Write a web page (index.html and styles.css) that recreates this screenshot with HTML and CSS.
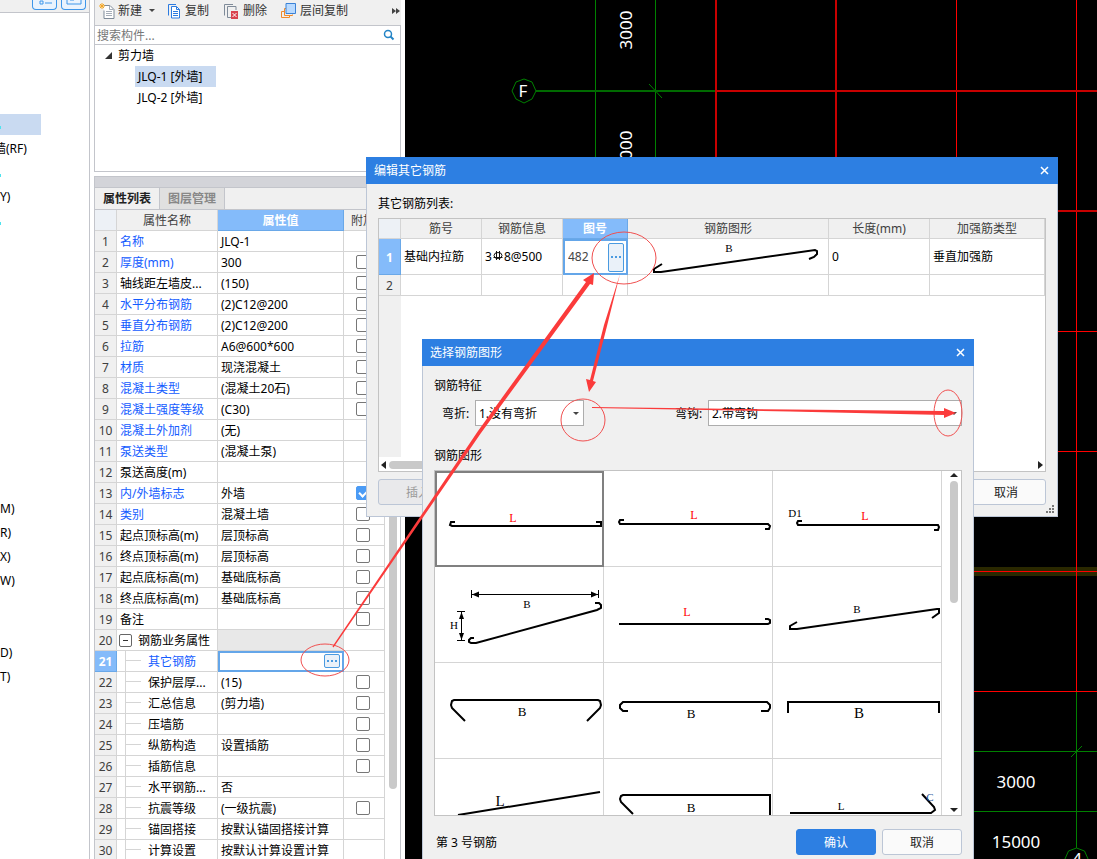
FILE: index.html
```html
<!DOCTYPE html>
<html lang="zh-CN">
<head>
<meta charset="utf-8">
<title>编辑其它钢筋</title>
<link rel="stylesheet" href="styles.css">
</head>
<body>
<div class="app">
  <aside class="nav">
    <div class="nav-tools">
      <button class="nav-btn" aria-label="列表视图"><svg width="16" height="12"><path d="M3 6h3v3h-3zM8 8h7" fill="none" stroke="#3d96ea"/></svg></button>
      <button class="nav-btn" aria-label="图标视图"><svg width="16" height="12"><path d="M1 0v9h14v-9M4 5h4" fill="none" stroke="#3d96ea"/></svg></button>
    </div>
    <ul class="nav-list">
      <li class="selected"><i class="speck"></i></li>
      <li><span class="cut">墙(RF)</span></li>
      <li><i class="speck"></i></li>
      <li>Y)</li>
      <li><i class="speck"></i></li>
      <li></li><li></li><li></li><li></li><li></li><li></li><li></li><li></li><li></li><li></li><li></li>
      <li>M)</li>
      <li>R)</li>
      <li>X)</li>
      <li>W)</li>
      <li></li><li></li>
      <li>D)</li>
      <li>T)</li>
    </ul>
  </aside>

  <section class="panel">
    <div class="toolbar">
      <button class="tool tool-new"><svg width="16" height="16"><path d="M5 2.500h6l4 4v9h-10v-8" fill="#fff" stroke="#7f8b99"/><path d="M10.500 2.500v4h4M7 8.500h6M7 10.500h6M7 12.500h6" fill="none" stroke="#a5adb8"/><path d="M3 0v6M0 3h6M1 1l4 4M5 1l-4 4" stroke="#f5a623"/></svg>新建<i class="caret"></i></button>
      <button class="tool tool-copy"><svg width="14" height="16"><path d="M9 1.500h-7.500v11" fill="none" stroke="#2c7be0"/><path d="M4.500 3.500h5l3 3v8.500h-8z" fill="#fff" stroke="#2c7be0"/><path d="M9.500 3.500v3h3M6 8.500h5M6 10.500h5M6 12.500h5" fill="none" stroke="#2c7be0"/></svg>复制</button>
      <button class="tool tool-del"><svg width="16" height="16"><path d="M10 1.500h-8.500v11M13 7v-3.500h-8.500v11h4" fill="none" stroke="#7f8b99"/><path d="M8 8h7v8h-7z" fill="#d9434e"/><path d="M9.500 10l4 4M13.500 10l-4 4" stroke="#fff"/></svg>删除</button>
      <button class="tool tool-floor"><svg width="16" height="16"><path d="M3 8.500h-2.500v6h8v-2M5 5.500h-1.500v7h8v-1" fill="none" stroke="#f08a2b"/><path d="M5 .5h9.500v10h-9.500z" fill="#b9daff" stroke="#3b82d6"/></svg>层间复制</button>
      <button class="more" aria-label="更多"><svg width="8" height="6"><path d="M0 0l4 3-4 3zM4 0l4 3-4 3z" fill="#444"/></svg></button>
    </div>
    <div class="search">
      <input type="text" placeholder="搜索构件..." aria-label="搜索构件">
      <svg width="12" height="12"><circle cx="5" cy="5" r="3.500" fill="none" stroke="#2384c6" stroke-width="1.500"/><path d="M7.500 7.500l3 3" stroke="#2384c6" stroke-width="2"/></svg>
    </div>
    <div class="tree">
      <div class="tree-root"><svg width="7" height="7"><path d="M7 0v7h-7z" fill="#333"/></svg>剪力墙</div>
      <div class="tree-item"><span class="picked">JLQ-1 [外墙]</span></div>
      <div class="tree-item"><span>JLQ-2 [外墙]</span></div>
    </div>
    <div class="splitter"></div>
    <div class="props">
      <div class="tabs"><button class="tab active">属性列表</button><button class="tab">图层管理</button></div>
      <div class="props-body">
        <table class="grid prop-table">
          <colgroup><col class="c-num"><col class="c-name"><col class="c-value"><col class="c-extra"></colgroup>
          <thead><tr><th class="corner"></th><th>属性名称</th><th class="hot">属性值</th><th class="left">附加</th></tr></thead>
          <tbody>
            <tr><th>1</th><td class="link">名称</td><td>JLQ-1</td><td></td></tr>
            <tr><th>2</th><td class="link">厚度(mm)</td><td>300</td><td><input type="checkbox" aria-label="附加 厚度"></td></tr>
            <tr><th>3</th><td>轴线距左墙皮...</td><td>(150)</td><td><input type="checkbox" aria-label="附加 轴线距左墙皮"></td></tr>
            <tr><th>4</th><td class="link">水平分布钢筋</td><td>(2)C12@200</td><td><input type="checkbox" aria-label="附加 水平分布钢筋"></td></tr>
            <tr><th>5</th><td class="link">垂直分布钢筋</td><td>(2)C12@200</td><td><input type="checkbox" aria-label="附加 垂直分布钢筋"></td></tr>
            <tr><th>6</th><td class="link">拉筋</td><td>A6@600*600</td><td><input type="checkbox" aria-label="附加 拉筋"></td></tr>
            <tr><th>7</th><td class="link">材质</td><td>现浇混凝土</td><td><input type="checkbox" aria-label="附加 材质"></td></tr>
            <tr><th>8</th><td class="link">混凝土类型</td><td>(混凝土20石)</td><td><input type="checkbox" aria-label="附加 混凝土类型"></td></tr>
            <tr><th>9</th><td class="link">混凝土强度等级</td><td>(C30)</td><td><input type="checkbox" aria-label="附加 混凝土强度等级"></td></tr>
            <tr><th>10</th><td class="link">混凝土外加剂</td><td>(无)</td><td></td></tr>
            <tr><th>11</th><td class="link">泵送类型</td><td>(混凝土泵)</td><td></td></tr>
            <tr><th>12</th><td>泵送高度(m)</td><td></td><td></td></tr>
            <tr><th>13</th><td class="link">内/外墙标志</td><td>外墙</td><td><input type="checkbox" checked aria-label="附加 内/外墙标志"></td></tr>
            <tr><th>14</th><td class="link">类别</td><td>混凝土墙</td><td><input type="checkbox" aria-label="附加 类别"></td></tr>
            <tr><th>15</th><td>起点顶标高(m)</td><td>层顶标高</td><td><input type="checkbox" aria-label="附加 起点顶标高"></td></tr>
            <tr><th>16</th><td>终点顶标高(m)</td><td>层顶标高</td><td><input type="checkbox" aria-label="附加 终点顶标高"></td></tr>
            <tr><th>17</th><td>起点底标高(m)</td><td>基础底标高</td><td><input type="checkbox" aria-label="附加 起点底标高"></td></tr>
            <tr><th>18</th><td>终点底标高(m)</td><td>基础底标高</td><td><input type="checkbox" aria-label="附加 终点底标高"></td></tr>
            <tr><th>19</th><td>备注</td><td></td><td><input type="checkbox" aria-label="附加 备注"></td></tr>
            <tr><th>20</th><td class="group"><button class="fold" aria-label="折叠"></button>钢筋业务属性</td><td class="muted"></td><td></td></tr>
            <tr><th class="hot">21</th><td class="child link">其它钢筋</td><td class="editing"><button class="dots" aria-label="编辑其它钢筋"><i></i><i></i><i></i></button></td><td></td></tr>
            <tr><th>22</th><td class="child">保护层厚...</td><td>(15)</td><td><input type="checkbox" aria-label="附加 保护层厚度"></td></tr>
            <tr><th>23</th><td class="child">汇总信息</td><td>(剪力墙)</td><td><input type="checkbox" aria-label="附加 汇总信息"></td></tr>
            <tr><th>24</th><td class="child">压墙筋</td><td></td><td><input type="checkbox" aria-label="附加 压墙筋"></td></tr>
            <tr><th>25</th><td class="child">纵筋构造</td><td>设置插筋</td><td><input type="checkbox" aria-label="附加 纵筋构造"></td></tr>
            <tr><th>26</th><td class="child">插筋信息</td><td></td><td><input type="checkbox" aria-label="附加 插筋信息"></td></tr>
            <tr><th>27</th><td class="child">水平钢筋...</td><td>否</td><td></td></tr>
            <tr><th>28</th><td class="child">抗震等级</td><td>(一级抗震)</td><td><input type="checkbox" aria-label="附加 抗震等级"></td></tr>
            <tr><th>29</th><td class="child">锚固搭接</td><td>按默认锚固搭接计算</td><td></td></tr>
            <tr><th>30</th><td class="child">计算设置</td><td>按默认计算设置计算</td><td></td></tr>
          </tbody>
        </table>
        <div class="vscroll"><div class="vthumb"></div></div>
      </div>
    </div>
  </section>

  <main class="canvas">
    <svg class="drawing" width="692" height="859" viewBox="405 0 692 859">
      <path d="M970 571.500h127" stroke="#2a2800" stroke-width="9"/>
      <g fill="none" stroke="#008000">
        <path d="M595.500 0v160M655.500 0v160M649 84l13 14M970 751.500h127M970 811.500h127M1076.500 692v156M1071 757l11-11"/>
        <path d="M536 91h180" stroke="#006a00" stroke-width="2"/>
        <path d="M524 79l8 3 4 9-4 8-8 4-8-4-4-8 4-9zM1076.500 848l8 3 4 9-4 8-8 4-8-4-4-8 4-9z"/>
      </g>
      <g fill="none" stroke="#f00">
        <path d="M956.500 0v160M1076.500 0v692M1050 331.500h47M1050 451.500h47M970 571.500h127M970 691.500h127"/>
        <path d="M716 0v160M836 0v160M716 91h381M1050 211h47" stroke="#c80000" stroke-width="2"/>
      </g>
      <g class="cad-text">
        <text x="523" y="97">F</text>
        <text x="0" y="0" transform="translate(632 30) rotate(-90)">3000</text>
        <text x="0" y="0" transform="translate(632 150) rotate(-90)">3000</text>
        <text x="1016" y="788">3000</text>
        <text x="1016" y="848">15000</text>
        <text x="1077" y="865">4</text>
      </g>
    </svg>
  </main>

  <section class="dialog list-dialog" role="dialog" aria-label="编辑其它钢筋">
    <header class="title">编辑其它钢筋<button class="close" aria-label="关闭"><svg width="9" height="9"><path d="M1 1l7 7M8 1l-7 7" stroke="#fff" stroke-width="1.500"/></svg></button></header>
    <div class="list-body">
      <div class="caption">其它钢筋列表:</div>
      <div class="list-box">
        <table class="grid bar-table">
          <colgroup><col class="b-num"><col class="b-id"><col class="b-id"><col class="b-code"><col class="b-shape"><col class="b-len"><col></colgroup>
          <thead><tr><th class="corner"></th><th>筋号</th><th>钢筋信息</th><th class="hot">图号</th><th>钢筋图形</th><th>长度(mm)</th><th>加强筋类型</th></tr></thead>
          <tbody>
            <tr class="tall"><th class="hot">1</th><td>基础内拉筋</td><td><span class="spec">3<svg class="rebar" width="12" height="12"><ellipse cx="6" cy="5.500" rx="4" ry="3" fill="none" stroke="#111"/><path d="M4.500 1v9M7.500 1v9M1.500 7.500h9" stroke="#111" fill="none"/></svg>8@500</span></td>
              <td class="editing"><div class="code-edit"><input type="text" value="482" aria-label="图号"><button class="dots" aria-label="选择图形"><i></i><i></i><i></i></button></div></td>
              <td class="shape"><svg width="200" height="35"><path class="bar" d="M34 25l-8 5v3h7L187 11l2 1v3l-3 3-5 2"/><text x="101" y="13">B</text></svg></td><td>0</td><td>垂直加强筋</td></tr>
            <tr><th>2</th><td></td><td></td><td></td><td></td><td></td><td></td></tr>
          </tbody>
        </table>
        <div class="gutter"></div>
        <div class="hscroll"><svg width="5" height="8"><path d="M5 0v8l-5-4z" fill="#222"/></svg><div class="hthumb"></div><svg width="5" height="8"><path d="M0 0v8l5-4z" fill="#222"/></svg></div>
      </div>
      <div class="actions"><button class="btn" disabled>插入</button><button class="btn">取消</button></div>
    </div>
    <svg class="grip" width="9" height="9"><path d="M6 0h2v2h-2zM3 3h2v2h-2zM6 3h2v2h-2zM0 6h2v2h-2zM3 6h2v2h-2zM6 6h2v2h-2z" fill="#777"/></svg>
  </section>

  <section class="dialog pick-dialog" role="dialog" aria-label="选择钢筋图形">
    <header class="title">选择钢筋图形<button class="close" aria-label="关闭"><svg width="9" height="9"><path d="M1 1l7 7M8 1l-7 7" stroke="#fff" stroke-width="1.500"/></svg></button></header>
    <div class="pick-body">
      <div class="caption">钢筋特征</div>
      <div class="fields">
        <label for="bend">弯折:</label>
        <div class="combo combo-bend"><select id="bend"><option>1.没有弯折</option></select></div>
        <label for="hook">弯钩:</label>
        <div class="combo combo-hook"><select id="hook"><option>2.带弯钩</option></select></div>
      </div>
      <div class="caption">钢筋图形</div>
      <div class="gallery">
        <div class="shapes">
          <div class="cell chosen"><svg width="168" height="95"><path class="bar" d="M20 51h-4l-1 3 2 1H166v-4h-5"/><text class="red" x="78" y="51">L</text></svg></div>
          <div class="cell"><svg width="168" height="95"><path class="bar" d="M20 49h-4l-1 2 1 2H164l2 2-1 3h-4"/><text class="red" x="90" y="48">L</text></svg></div>
          <div class="cell"><svg width="168" height="95"><path class="bar" d="M29 50h-4l-1 2 1 2H165l1 2-1 3h-4"/><text x="22" y="46">D1</text><text class="red" x="92" y="49">L</text></svg></div>
          <div class="cell"><svg width="168" height="95"><path class="bar" d="M39 71h-3l-2 2v2l2 1h5L162 43l4-2v-3l-2-2h-4"/><path d="M36.500 23v8M163.500 23v8M37 27.500h126M22 44.500h8M22 73.500h8M26.500 45v28" stroke="#000" fill="none"/><path d="M37 27.500l7-3v6zM163 27.500l-7-3v6zM26.500 45l-2.500 7h5zM26.500 73l-2.500-7h5z"/><text x="92" y="41">B</text><text x="19" y="62">H</text></svg></div>
          <div class="cell"><svg width="168" height="95"><path class="bar" d="M15 57H164l2-1v-3l-2-1h-3"/><text class="red" x="83" y="49">L</text></svg></div>
          <div class="cell"><svg width="168" height="95"><path class="bar" d="M24 55l-7 4v3h7L164 42h2v4l-7 5"/><text x="84" y="46">B</text></svg></div>
          <div class="cell"><svg width="168" height="95"><path class="bar" d="M30 58L17 45l-1-3 1-4 2-1H163l2 1 1 4-1 3L152 58"/><text class="mid" x="87" y="53">B</text></svg></div>
          <div class="cell"><svg width="168" height="95"><path class="bar" d="M24 48h-5l-3-3v-3l3-3H163l3 3v3l-2 3h-7"/><text class="mid" x="87" y="55">B</text></svg></div>
          <div class="cell"><svg width="168" height="95"><path class="bar" d="M15 50V39H166V50"/><text class="big" x="86" y="55">B</text></svg></div>
          <div class="cell"><svg width="168" height="95"><path class="bar" d="M23 56L165 33"/><text class="big" x="65" y="47">L</text></svg></div>
          <div class="cell"><svg width="168" height="95"><path class="bar" d="M29 55L17 43l-1-3 1-3 2-1H166V70"/><text class="mid" x="87" y="53">B</text></svg></div>
          <div class="cell"><svg width="168" height="95"><path class="bar" d="M17 54H158l4-3-1-3L149 35"/><text x="68" y="51">L</text><text class="blue" x="157" y="42">C</text></svg></div>
        </div>
        <div class="gscroll"><svg width="8" height="4"><path d="M0 4l4-4 4 4z" fill="#222"/></svg><div class="gthumb"></div><svg width="8" height="4"><path d="M0 0l4 4 4-4z" fill="#222"/></svg></div>
      </div>
      <div class="actions footer"><span>第 3 号钢筋</span><button class="btn primary">确认</button><button class="btn">取消</button></div>
    </div>
  </section>

  <svg class="marks" width="1097" height="859">
    <g fill="none" stroke="#f05050">
      <ellipse cx="325" cy="660" rx="24" ry="16"/>
      <ellipse cx="624" cy="258" rx="32" ry="26"/>
      <ellipse cx="583" cy="420" rx="22" ry="21"/>
      <ellipse cx="948" cy="413" rx="14" ry="23"/>
    </g>
    <g fill="#fb3b3b">
      <path d="M332.500 646.500L478 431 586 282l-3-2 11-7-1 12-3-1L481 433 333.500 647.500z"/>
      <path d="M620 274L604 325 590 380l-4-1 3 13 7-10-3-1L607 326z"/>
      <path d="M592 407L790 409.500 944 411v-3l12 5-12 5v-3L790 411.500 592 408z"/>
    </g>
  </svg>
</div>
</body>
</html>
```

FILE: styles.css
```css
* { box-sizing: border-box; }
body {
  margin: 0;
  font: 12px/18px "Noto Sans", "Noto Sans CJK SC", sans-serif;
  color: #000;
}
button, input, select { font: inherit; color: inherit; margin: 0; padding: 0; }
button { border: 0; background: none; }
svg { display: block; flex: none; }
ul { list-style: none; margin: 0; padding: 0; }

.app {
  position: relative;
  display: flex;
  height: 100vh;
  overflow: hidden;
  background: #fff;
}

.nav {
  flex: none;
  width: 90px;
  border-right: 1px solid #c3c5cb;
  overflow: hidden;
}
.nav-tools {
  display: flex;
  justify-content: flex-end;
  gap: 4px;
  height: 13px;
  padding-right: 3px;
  background: #f0f0f0;
  border-bottom: 1px solid #c3c5cb;
}
.nav-btn {
  display: flex;
  justify-content: center;
  width: 25px;
  height: 10px;
  border: 1px solid #3d96ea;
  border-top: 0;
  border-radius: 0 0 4px 4px;
  background: #eaf3fd;
  overflow: hidden;
}
.nav-btn svg { margin-top: -5px; }
.nav-list { padding-top: 101px; }
.nav-list li { height: 21px; margin-bottom: 3px; line-height: 21px; white-space: nowrap; }
.nav-list .selected { width: 41px; background: #c9daf1; }
.nav-list .cut { margin-left: -6px; }
.speck {
  display: inline-block;
  width: 1px;
  height: 3px;
  background: #4fe3ee;
}

.panel {
  flex: none;
  display: flex;
  flex-direction: column;
  width: 307px;
  margin: 0 4px;
  overflow: hidden;
}
.toolbar {
  flex: none;
  display: flex;
  align-items: center;
  height: 26px;
  padding: 0 1px 4px 4px;
  background: #f0f0f0;
  border: solid #c3c5cb;
  border-width: 0 0 1px 1px;
}
.tool {
  display: flex;
  align-items: center;
  gap: 4px;
  height: 20px;
  color: #333;
  white-space: nowrap;
}
.tool-new, .tool-floor { gap: 3px; }
.tool-del, .tool-floor { margin-left: 14px; }
.tool-copy { margin-left: 12px; }
.caret, .combo::after {
  border: 3px solid transparent;
  border-top-color: #444;
  border-bottom: 0;
}
.caret { margin-left: 4px; }
.more { margin-left: auto; }
.search {
  flex: none;
  display: flex;
  align-items: center;
  height: 19px;
  padding: 0 5px 0 2px;
  border: solid #c3c5cb;
  border-width: 0 1px 1px;
}
.search input { flex: 1; min-width: 0; height: 18px; padding-top: 1px; border: 0; outline: 0; background: none; }
.search input::placeholder { color: #777; opacity: 1; }
.tree {
  flex: none;
  height: 127px;
  border: solid #c3c5cb;
  border-width: 0 1px 1px;
  line-height: 21px;
}
.tree-root { display: flex; align-items: center; gap: 6px; padding-left: 10px; }
.tree-item { padding-left: 40px; }
.tree-item span { display: inline-block; width: 81px; height: 21px; padding-left: 3px; vertical-align: top; white-space: nowrap; }
.tree-item .picked { background: #c9daf1; }
.splitter {
  flex: none;
  height: 12px;
  margin-top: 4px;
  background: #d3d4d9;
  border: 1px solid #c3c5cb;
}
.props {
  flex: 1;
  min-height: 0;
  overflow: hidden;
  border: solid #c3c5cb;
  border-width: 0 1px;
}
.tabs {
  display: flex;
  height: 22px;
  background: #f0f0f0;
  border-bottom: 1px solid #c3c5cb;
}
.tab {
  width: 65px;
  background: #e0e0e0;
  border-right: 1px solid #c3c5cb;
  color: #888;
  font-weight: bold;
}
.tab.active { background: #f0f0f0; color: #222; }
.props-body { display: flex; }
.vscroll { flex: 1; padding-left: 4px; }
.vthumb { width: 8px; height: 579px; border-radius: 4px; background: #c9c9c9; }

.grid { table-layout: fixed; border-collapse: separate; border-spacing: 0; }
.grid th, .grid td {
  height: 21px;
  padding: 0;
  border: solid #d5d5d5;
  border-width: 0 1px 1px 0;
  line-height: 20px;
  white-space: nowrap;
  overflow: hidden;
}
.grid th { background: #f0f0f0; color: #404040; font-weight: normal; text-align: center; }
.grid td { background: #fff; padding-left: 3px; text-align: left; }
.grid th, .prop-table td { padding-top: 1px; line-height: 19px; }
.grid .corner { background: #edf1f6; }
.grid .hot { background: #84bbfa; border-color: #6aa8e8; color: #fff; font-weight: bold; }
.grid .left { text-align: left; padding-left: 7px; }
.grid .link { color: #145cff; }
.grid .muted { background: #e8e8e8; }
.grid .editing { position: relative; padding-top: 0; border: 0; outline: 2px solid #64a6e9; outline-offset: -2px; }
.prop-table { width: 290px; flex: none; }
.c-num { width: 22px; }
.c-name { width: 101px; }
.c-value { width: 126px; }
.c-extra { width: 41px; }
.prop-table input {
  appearance: none;
  display: block;
  width: 14px;
  height: 14px;
  margin: 0 0 2px 9px;
  border: 1px solid #777;
  border-radius: 2px;
  background: #fff;
}
.prop-table input:checked { background: #4b9bf5; border-color: #4b9bf5; }
.prop-table input:checked::after {
  content: "";
  display: block;
  width: 8px;
  height: 4px;
  margin: 2px;
  border: solid #fff;
  border-width: 0 0 2px 2px;
  transform: rotate(-45deg);
}
.fold {
  display: inline-block;
  width: 13px;
  height: 13px;
  margin: 0 6px 2px -1px;
  border: 1px solid #666;
  border-radius: 2px;
  background: linear-gradient(#333, #333) center / 5px 1px no-repeat #fff;
  vertical-align: middle;
}
.grid .child {
  padding-left: 31px;
  background:
    linear-gradient(#d5d5d5, #d5d5d5) 8px 0 / 1px 100% no-repeat,
    linear-gradient(#d5d5d5, #d5d5d5) 8px 9px / 16px 1px no-repeat #fff;
}
.dots {
  display: flex;
  align-items: center;
  justify-content: center;
  gap: 2px;
  width: 16px;
  height: 14px;
  border: 1px solid #4a9ae0;
  border-radius: 2px;
  background: #eaf1f9;
}
.dots i { width: 2px; height: 2px; background: #4a9ae0; }
.prop-table .dots { margin: 0 4px 2px auto; }

.canvas { flex: 1; min-width: 0; background: #000; overflow: hidden; }
.cad-text { font-size: 17px; fill: #fff; text-anchor: middle; }

.dialog {
  position: absolute;
  background: #f0f0f0;
  border: solid #bcc6d6;
  border-width: 0 1px 1px;
}
.list-dialog { left: 366px; top: 157px; width: 692px; }
.pick-dialog { left: 422px; top: 339px; width: 552px; }
.title {
  display: flex;
  align-items: center;
  justify-content: space-between;
  height: 27px;
  margin: 0 -1px;
  padding: 0 9px 0 8px;
  background: #2d7fe2;
  color: #fff;
}
.list-body { padding: 11px 11px 11px; }
.list-box {
  display: flex;
  flex-direction: column;
  height: 254px;
  margin-top: 5px;
  border: 1px solid #c3c3c3;
  background: #fff;
}
.bar-table { width: 100%; }
.bar-table thead th { height: 20px; line-height: 18px; }
.bar-table .tall td, .bar-table .tall th { height: 36px; }
.b-num { width: 22px; }
.b-id { width: 81px; }
.b-code { width: 65px; }
.b-shape { width: 201px; }
.b-len { width: 101px; }
.spec { display: flex; align-items: center; }
.rebar { margin-bottom: 1px; }
.code-edit { display: flex; align-items: center; padding: 0 4px 0 2px; }
.code-edit input { flex: 1; min-width: 0; border: 0; outline: 0; background: none; color: #444; }
.code-edit .dots { height: 29px; }
.grid .shape { padding: 0; }
.gutter { flex: 1; width: 22px; background: #f0f0f0; }
.hscroll { display: flex; align-items: center; gap: 3px; height: 14px; padding: 1px 2px 0; }
.hthumb { width: 400px; height: 8px; margin-right: auto; border-radius: 4px; background: #c9c9c9; }
.actions { display: flex; justify-content: space-between; margin-top: 7px; }
.btn {
  width: 80px;
  height: 26px;
  padding-top: 1px;
  border: 1px solid #bcc6d6;
  border-radius: 3px;
  background: #fafafa;
  color: #222;
}
.btn:disabled { background: #e9e9eb; color: #999; }
.btn.primary { background: #2d7fe2; border-color: #2d7fe2; color: #fff; }
.grip { position: absolute; right: 2px; bottom: 2px; }

.pick-body { padding: 11px 11px 10px; }
.fields { display: flex; align-items: center; margin: 5px 0 21px; padding-left: 8px; }
.fields label { width: 33px; padding-top: 2px; white-space: nowrap; }
.combo { position: relative; }
.combo::after { content: ""; position: absolute; right: 5px; top: 12px; }
.combo-bend { width: 109px; margin-right: 91px; }
.combo-hook { flex: 1; }
.combo select {
  appearance: none;
  display: block;
  width: 100%;
  height: 26px;
  padding: 2px 0 0 3px;
  border: 1px solid #adadad;
  border-radius: 0;
  background: #fff;
}
.gallery {
  display: flex;
  height: 346px;
  margin-top: 5px;
  border: 1px solid #c3c3c3;
  background: #fff;
  overflow: hidden;
}
.shapes { flex: 1; display: grid; grid-template-columns: repeat(3, 1fr); grid-auto-rows: 96px; }
.cell { border: solid #d5d5d5; border-width: 0 1px 1px 0; }
.cell.chosen { outline: 2px solid #808080; outline-offset: -2px; }
.gscroll { display: flex; flex-direction: column; align-items: center; gap: 4px; width: 19px; padding: 2px 0 3px 5px; }
.gthumb { width: 8px; height: 122px; margin-bottom: auto; border-radius: 4px; background: #c9c9c9; }
.bar { fill: none; stroke: #000; stroke-width: 2; }
.cell text, .shape text { font: 11px "Liberation Serif", serif; text-anchor: middle; }
.cell .mid { font-size: 13px; }
.cell .big { font-size: 15px; }
.cell .red { font-size: 12px; fill: #f00; }
.cell .blue { fill: #2b5a9c; }
.footer { align-items: center; gap: 6px; margin-top: 13px; }
.footer span { margin-right: auto; padding: 1px 0 0 2px; }

.marks { position: absolute; left: 0; top: 0; pointer-events: none; }
```
